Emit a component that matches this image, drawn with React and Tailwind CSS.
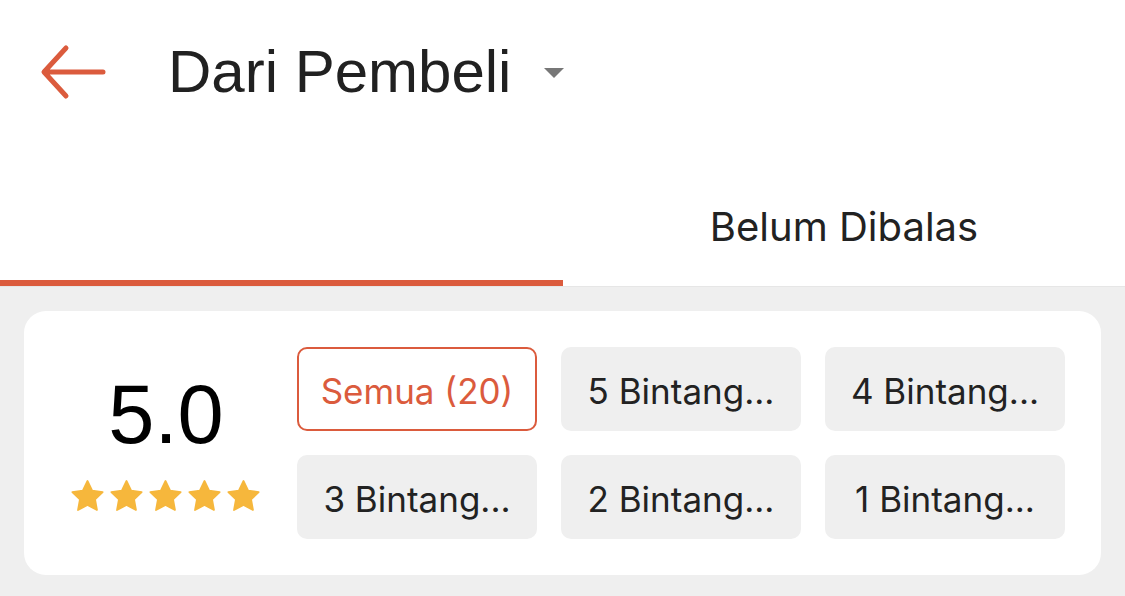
import { useState } from "react";

const chips = ["Semua (20)", "5 Bintang...", "4 Bintang...", "3 Bintang...", "2 Bintang...", "1 Bintang..."];

function Star() {
  return (
    <svg width="35" height="34" viewBox="0 0 24 23">
      <path
        d="M12 1.2l3.2 6.6 7.2 1-5.2 5.1 1.3 7.2L12 17.7l-6.5 3.4 1.3-7.2L1.6 8.8l7.2-1z"
        fill="#f6b73c"
        stroke="#f6b73c"
        strokeWidth="1.2"
        strokeLinejoin="round"
      />
    </svg>
  );
}

export default function App() {
  const [active, setActive] = useState(0);

  return (
    <div className="w-[1125px] h-[596px] bg-[#efefef] overflow-hidden">
      <div className="bg-white">
        <div className="h-[144px] flex items-center">
          <svg className="ml-[40px]" width="66" height="58" viewBox="0 0 66 58">
            <path
              d="M63 29H5M26 5L4 29l22 24"
              fill="none"
              stroke="#db5b3d"
              strokeWidth="5"
              strokeLinecap="round"
              strokeLinejoin="round"
            />
          </svg>
          <h1 className="ml-[62px] text-[60px] leading-none text-[#212121] font-['Liberation_Sans',Arial,sans-serif]">
            Dari Pembeli
          </h1>
          <svg className="ml-[32px] mt-[2px]" width="22" height="12" viewBox="0 0 22 12">
            <path d="M1 1h20L11 11z" fill="#777777" />
          </svg>
        </div>
        <div className="flex h-[143px] border-b border-[#e6e6e6] font-['Inter',sans-serif]">
          <button className="w-[563px] flex flex-col justify-end">
            <div className="h-[6px] bg-[#db5b3d]" />
          </button>
          <button className="flex-1 flex flex-col justify-end">
            <span className="text-[40px] leading-[44px] text-[#222]">Belum Dibalas</span>
            <div className="h-[6px] mt-[31px]" />
          </button>
        </div>
      </div>

      <div className="px-[24px] pt-[24px]">
        <div className="bg-white rounded-[22px] flex items-center pl-[48px] pr-[36px] py-[36px]">
          <div className="w-[188px] flex flex-col items-center">
            <div className="text-[83px] leading-none text-black font-['Liberation_Sans',Arial,sans-serif]">5.0</div>
            <div className="flex gap-[4px] mt-[23px] -ml-[2px]">
              <Star />
              <Star />
              <Star />
              <Star />
              <Star />
            </div>
          </div>
          <div className="ml-[37px] grid grid-cols-3 gap-[24px] flex-1 font-['Inter',sans-serif]">
            {chips.map((c, i) => (
              <button
                key={c}
                onClick={() => setActive(i)}
                className={
                  i === active
                    ? "h-[84px] rounded-[10px] border-2 border-[#db5b3d] bg-white text-[#db5b3d] text-[35px] pt-[4px]"
                    : "h-[84px] rounded-[10px] bg-[#efefef] text-[#222] text-[35px] pt-[4px]"
                }
              >
                {c}
              </button>
            ))}
          </div>
        </div>
      </div>
    </div>
  );
}
